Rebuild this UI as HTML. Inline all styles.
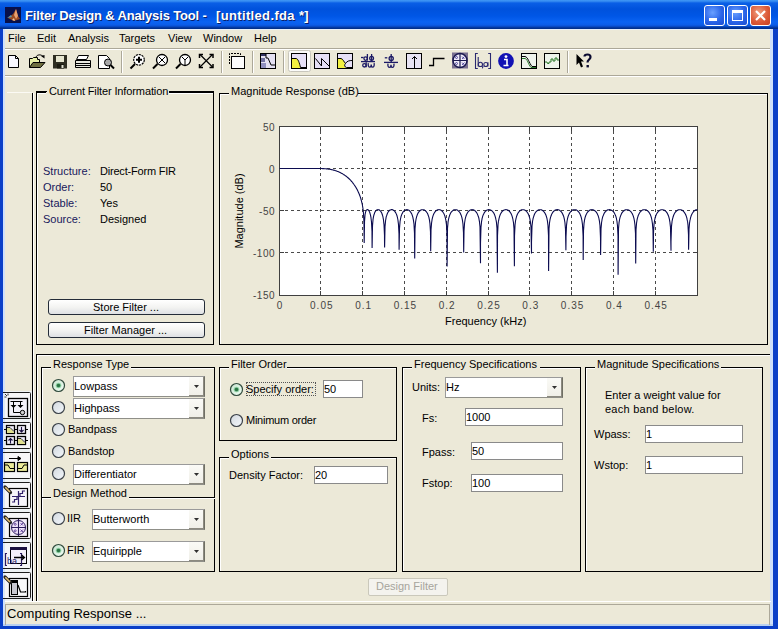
<!DOCTYPE html><html><head><meta charset="utf-8"><style>
html,body{margin:0;padding:0;width:778px;height:629px;overflow:hidden;background:#ECE9D8;font-family:"Liberation Sans", sans-serif}
.t{position:absolute;white-space:pre;font-family:"Liberation Sans", sans-serif}
svg{display:block}
</style></head><body>
<div style="position:absolute;left:0px;top:0px;width:778px;height:29px;background:linear-gradient(#3d95f5 0px,#3a90f2 1px,#0a5fe6 3px,#0052dc 9px,#0056e6 16px,#0a63f2 22px,#0b5ce8 25px,#0743b8 27px,#002f8c 28px)"></div>
<div style="position:absolute;left:0px;top:29px;width:3px;height:600px;background:#0a3fc8"></div>
<div style="position:absolute;left:3px;top:29px;width:2px;height:597px;background:#cfe0fb"></div>
<div style="position:absolute;left:773px;top:29px;width:5px;height:600px;background:#0a3fc8"></div>
<div style="position:absolute;left:770px;top:29px;width:3px;height:597px;background:#cfe0fb"></div>
<div style="position:absolute;left:0px;top:626px;width:778px;height:3px;background:#0a3fc8"></div>
<div style="position:absolute;left:3px;top:624px;width:770px;height:2px;background:#b8d0f0"></div>
<div style="position:absolute;left:5px;top:29px;width:766px;height:1px;background:#e6effb"></div>
<svg style="position:absolute;left:5px;top:7px" width="16" height="16"><rect width="16" height="16" fill="#08104a"/><path d="M3 11 L8 7 L11 2 L13 9 L15 12 L9 14 Z" fill="#9a4a22"/><path d="M11 2 L13 9 L11 12 L9 8Z" fill="#e8a070"/><path d="M7 13 L9 11 L10 14Z" fill="#f0c8a0"/><path d="M2 11 L6 8 L7 10Z" fill="#5a9ab0"/></svg>
<div class="t" style="left:25px;top:9px;font-size:13px;line-height:13px;color:#fff;font-weight:bold;letter-spacing:-0.15px;text-shadow:1px 1px 0 #0a1e6a;">Filter Design &amp; Analysis Tool -</div>
<div class="t" style="left:216px;top:9px;font-size:13px;line-height:13px;color:#fff;font-weight:bold;letter-spacing:0.35px;text-shadow:1px 1px 0 #0a1e6a;">[untitled.fda *]</div>
<div style="position:absolute;left:704px;top:5px;width:21px;height:21px;box-sizing:border-box;border:1px solid #fff;border-radius:3px;background:radial-gradient(circle at 40% 35%,#6aa0ff,#2a64e8 55%,#1a4cd0)"></div>
<div style="position:absolute;left:709px;top:18px;width:8px;height:3px;background:#fff"></div>
<div style="position:absolute;left:727px;top:5px;width:21px;height:21px;box-sizing:border-box;border:1px solid #fff;border-radius:3px;background:radial-gradient(circle at 40% 35%,#6aa0ff,#2a64e8 55%,#1a4cd0)"></div>
<svg style="position:absolute;left:727px;top:5px" width="21" height="21"><rect x="5.5" y="5.5" width="10" height="10" fill="none" stroke="#fff" stroke-width="1"/><rect x="5" y="5" width="11" height="3" fill="#fff"/></svg>
<div style="position:absolute;left:750px;top:5px;width:21px;height:21px;box-sizing:border-box;border:1px solid #fff;border-radius:3px;background:radial-gradient(circle at 40% 35%,#f0a080,#dc5a38 55%,#c84020)"></div>
<svg style="position:absolute;left:750px;top:5px" width="21" height="21"><path d="M6 6L15 15M15 6L6 15" stroke="#fff" stroke-width="2.2"/></svg>
<div class="t" style="left:8px;top:33px;font-size:11px;line-height:11px;color:#000;">File</div>
<div class="t" style="left:37px;top:33px;font-size:11px;line-height:11px;color:#000;">Edit</div>
<div class="t" style="left:68px;top:33px;font-size:11px;line-height:11px;color:#000;">Analysis</div>
<div class="t" style="left:119px;top:33px;font-size:11px;line-height:11px;color:#000;">Targets</div>
<div class="t" style="left:168px;top:33px;font-size:11px;line-height:11px;color:#000;">View</div>
<div class="t" style="left:203px;top:33px;font-size:11px;line-height:11px;color:#000;">Window</div>
<div class="t" style="left:254px;top:33px;font-size:11px;line-height:11px;color:#000;">Help</div>
<div style="position:absolute;left:5px;top:48px;width:765px;height:1px;background:#aca899"></div>
<div style="position:absolute;left:5px;top:49px;width:765px;height:1px;background:#fff"></div>
<div style="position:absolute;left:5px;top:75px;width:766px;height:1px;background:#aca899"></div>
<div style="position:absolute;left:5px;top:76px;width:766px;height:1px;background:#fff"></div>
<div style="position:absolute;left:7px;top:92px;width:25px;height:1px;background:#fbfaf4"></div>
<div style="position:absolute;left:32px;top:93px;width:1px;height:508px;background:#000"></div>
<div style="position:absolute;left:33px;top:93px;width:1px;height:508px;background:#fff"></div>
<div style="position:absolute;left:5px;top:601px;width:766px;height:1px;background:#fff"></div>
<div style="position:absolute;left:37px;top:93px;width:177px;height:252px;border:1px solid #fff;box-sizing:border-box"></div>
<div style="position:absolute;left:36px;top:92px;width:178px;height:253px;border:1px solid #000;box-sizing:border-box"></div>
<div style="position:absolute;left:46px;top:91px;width:123px;height:4px;background:#ECE9D8"></div>
<div class="t" style="left:49px;top:86px;font-size:11px;line-height:11px;color:#000;letter-spacing:-0.12px;">Current Filter Information</div>
<div style="position:absolute;left:36px;top:91px;width:11px;height:1px;background:#000"></div>
<div style="position:absolute;left:169px;top:91px;width:45px;height:1px;background:#000"></div>
<div style="position:absolute;left:220px;top:94px;width:548px;height:251px;border:1px solid #fff;box-sizing:border-box"></div>
<div style="position:absolute;left:219px;top:93px;width:549px;height:252px;border:1px solid #000;box-sizing:border-box"></div>
<div style="position:absolute;left:229px;top:92px;width:129px;height:4px;background:#ECE9D8"></div>
<div class="t" style="left:231px;top:86px;font-size:11px;line-height:11px;color:#000;">Magnitude Response (dB)</div>
<div style="position:absolute;left:36px;top:354px;width:734px;height:1px;background:#000"></div>
<div style="position:absolute;left:37px;top:355px;width:733px;height:1px;background:#fff"></div>
<div style="position:absolute;left:36px;top:354px;width:1px;height:247px;background:#000"></div>
<div style="position:absolute;left:37px;top:355px;width:1px;height:246px;background:#fff"></div>
<div style="position:absolute;left:42px;top:368px;width:173px;height:204px;border:1px solid #fff;box-sizing:border-box"></div>
<div style="position:absolute;left:41px;top:367px;width:174px;height:205px;border:1px solid #000;box-sizing:border-box"></div>
<div style="position:absolute;left:51px;top:366px;width:80px;height:4px;background:#ECE9D8"></div>
<div class="t" style="left:53px;top:359px;font-size:11px;line-height:11px;color:#000;">Response Type</div>
<div style="position:absolute;left:41px;top:497px;width:174px;height:1px;background:#000"></div>
<div style="position:absolute;left:42px;top:498px;width:173px;height:1px;background:#fff"></div>
<div style="position:absolute;left:51px;top:494px;width:78px;height:5px;background:#ECE9D8"></div>
<div class="t" style="left:53px;top:488px;font-size:11px;line-height:11px;color:#000;">Design Method</div>
<div style="position:absolute;left:220px;top:368px;width:177px;height:73px;border:1px solid #fff;box-sizing:border-box"></div>
<div style="position:absolute;left:219px;top:367px;width:178px;height:74px;border:1px solid #000;box-sizing:border-box"></div>
<div style="position:absolute;left:229px;top:366px;width:58px;height:4px;background:#ECE9D8"></div>
<div class="t" style="left:231px;top:359px;font-size:11px;line-height:11px;color:#000;">Filter Order</div>
<div style="position:absolute;left:220px;top:458px;width:177px;height:114px;border:1px solid #fff;box-sizing:border-box"></div>
<div style="position:absolute;left:219px;top:457px;width:178px;height:115px;border:1px solid #000;box-sizing:border-box"></div>
<div style="position:absolute;left:229px;top:456px;width:42px;height:4px;background:#ECE9D8"></div>
<div class="t" style="left:231px;top:449px;font-size:11px;line-height:11px;color:#000;">Options</div>
<div style="position:absolute;left:403px;top:368px;width:178px;height:204px;border:1px solid #fff;box-sizing:border-box"></div>
<div style="position:absolute;left:402px;top:367px;width:179px;height:205px;border:1px solid #000;box-sizing:border-box"></div>
<div style="position:absolute;left:412px;top:366px;width:128px;height:4px;background:#ECE9D8"></div>
<div class="t" style="left:414px;top:359px;font-size:11px;line-height:11px;color:#000;">Frequency Specifications</div>
<div style="position:absolute;left:586px;top:368px;width:177px;height:204px;border:1px solid #fff;box-sizing:border-box"></div>
<div style="position:absolute;left:585px;top:367px;width:178px;height:205px;border:1px solid #000;box-sizing:border-box"></div>
<div style="position:absolute;left:595px;top:366px;width:126px;height:4px;background:#ECE9D8"></div>
<div class="t" style="left:597px;top:359px;font-size:11px;line-height:11px;color:#000;">Magnitude Specifications</div>
<div class="t" style="left:43px;top:166px;font-size:11px;line-height:11px;color:#18185c;">Structure:</div>
<div class="t" style="left:100px;top:166px;font-size:11px;line-height:11px;color:#000;letter-spacing:-0.2px;">Direct-Form FIR</div>
<div class="t" style="left:43px;top:182px;font-size:11px;line-height:11px;color:#18185c;">Order:</div>
<div class="t" style="left:100px;top:182px;font-size:11px;line-height:11px;color:#000;">50</div>
<div class="t" style="left:43px;top:198px;font-size:11px;line-height:11px;color:#18185c;">Stable:</div>
<div class="t" style="left:100px;top:198px;font-size:11px;line-height:11px;color:#000;">Yes</div>
<div class="t" style="left:43px;top:214px;font-size:11px;line-height:11px;color:#18185c;">Source:</div>
<div class="t" style="left:100px;top:214px;font-size:11px;line-height:11px;color:#000;">Designed</div>
<div style="position:absolute;left:48px;top:299px;width:157px;height:16px;background:linear-gradient(#ffffff,#f4f4f2 50%,#dfe1e4);border:1px solid #242c38;border-radius:3px;box-sizing:border-box"></div>
<div class="t" style="left:93px;top:302px;font-size:11px;line-height:11px;color:#000;">Store Filter ...</div>
<div style="position:absolute;left:48px;top:322px;width:157px;height:16px;background:linear-gradient(#ffffff,#f4f4f2 50%,#dfe1e4);border:1px solid #242c38;border-radius:3px;box-sizing:border-box"></div>
<div class="t" style="left:84px;top:325px;font-size:11px;line-height:11px;color:#000;">Filter Manager ...</div>
<svg style="position:absolute;left:51px;top:378px" width="15" height="15"><defs><linearGradient id="rg58_385" x1="0" y1="0" x2="1" y2="1"><stop offset="0" stop-color="#c8e4d0"/><stop offset="1" stop-color="#f2fff6"/></linearGradient></defs><circle cx="7.5" cy="7.5" r="6" fill="url(#rg58_385)" stroke="#304a3c" stroke-width="1.2"/><circle cx="7.5" cy="7.5" r="2.8" fill="#8fd0a4"/><circle cx="7.5" cy="7.5" r="1.8" fill="#2a7444"/></svg>
<div style="position:absolute;left:73px;top:376px;width:132px;height:21px;background:#fff;border:1px solid #9a9a9a;border-right-color:#6f6f64;border-bottom-color:#8f8f88;box-sizing:border-box"></div>
<div style="position:absolute;left:189px;top:377px;width:15px;height:19px;background:linear-gradient(#fafaf6,#f0efe8);border-right:1px solid #8c8a80;border-bottom:1px solid #8c8a80;box-sizing:border-box"></div>
<svg style="position:absolute;left:194px;top:385px" width="6" height="4"><path d="M0 0H5L2.5 3Z" fill="#303030"/></svg>
<div class="t" style="left:74px;top:381px;font-size:11px;line-height:11px;color:#000;">Lowpass</div>
<svg style="position:absolute;left:51px;top:400px" width="15" height="15"><defs><linearGradient id="rg58_407" x1="0" y1="0" x2="1" y2="1"><stop offset="0" stop-color="#d2d8de"/><stop offset="1" stop-color="#f4f8fc"/></linearGradient></defs><circle cx="7.5" cy="7.5" r="6" fill="url(#rg58_407)" stroke="#3a4048" stroke-width="1.2"/></svg>
<div style="position:absolute;left:73px;top:398px;width:132px;height:21px;background:#fff;border:1px solid #9a9a9a;border-right-color:#6f6f64;border-bottom-color:#8f8f88;box-sizing:border-box"></div>
<div style="position:absolute;left:189px;top:399px;width:15px;height:19px;background:linear-gradient(#fafaf6,#f0efe8);border-right:1px solid #8c8a80;border-bottom:1px solid #8c8a80;box-sizing:border-box"></div>
<svg style="position:absolute;left:194px;top:407px" width="6" height="4"><path d="M0 0H5L2.5 3Z" fill="#303030"/></svg>
<div class="t" style="left:74px;top:403px;font-size:11px;line-height:11px;color:#000;">Highpass</div>
<svg style="position:absolute;left:51px;top:422px" width="15" height="15"><defs><linearGradient id="rg58_429" x1="0" y1="0" x2="1" y2="1"><stop offset="0" stop-color="#d2d8de"/><stop offset="1" stop-color="#f4f8fc"/></linearGradient></defs><circle cx="7.5" cy="7.5" r="6" fill="url(#rg58_429)" stroke="#3a4048" stroke-width="1.2"/></svg>
<div class="t" style="left:68px;top:424px;font-size:11px;line-height:11px;color:#000;">Bandpass</div>
<svg style="position:absolute;left:51px;top:444px" width="15" height="15"><defs><linearGradient id="rg58_451" x1="0" y1="0" x2="1" y2="1"><stop offset="0" stop-color="#d2d8de"/><stop offset="1" stop-color="#f4f8fc"/></linearGradient></defs><circle cx="7.5" cy="7.5" r="6" fill="url(#rg58_451)" stroke="#3a4048" stroke-width="1.2"/></svg>
<div class="t" style="left:68px;top:446px;font-size:11px;line-height:11px;color:#000;">Bandstop</div>
<svg style="position:absolute;left:51px;top:466px" width="15" height="15"><defs><linearGradient id="rg58_473" x1="0" y1="0" x2="1" y2="1"><stop offset="0" stop-color="#d2d8de"/><stop offset="1" stop-color="#f4f8fc"/></linearGradient></defs><circle cx="7.5" cy="7.5" r="6" fill="url(#rg58_473)" stroke="#3a4048" stroke-width="1.2"/></svg>
<div style="position:absolute;left:73px;top:464px;width:132px;height:21px;background:#fff;border:1px solid #9a9a9a;border-right-color:#6f6f64;border-bottom-color:#8f8f88;box-sizing:border-box"></div>
<div style="position:absolute;left:189px;top:465px;width:15px;height:19px;background:linear-gradient(#fafaf6,#f0efe8);border-right:1px solid #8c8a80;border-bottom:1px solid #8c8a80;box-sizing:border-box"></div>
<svg style="position:absolute;left:194px;top:473px" width="6" height="4"><path d="M0 0H5L2.5 3Z" fill="#303030"/></svg>
<div class="t" style="left:74px;top:469px;font-size:11px;line-height:11px;color:#000;">Differentiator</div>
<svg style="position:absolute;left:51px;top:511px" width="15" height="15"><defs><linearGradient id="rg58_518" x1="0" y1="0" x2="1" y2="1"><stop offset="0" stop-color="#d2d8de"/><stop offset="1" stop-color="#f4f8fc"/></linearGradient></defs><circle cx="7.5" cy="7.5" r="6" fill="url(#rg58_518)" stroke="#3a4048" stroke-width="1.2"/></svg>
<div class="t" style="left:67px;top:513px;font-size:11px;line-height:11px;color:#000;">IIR</div>
<div style="position:absolute;left:92px;top:509px;width:113px;height:21px;background:#fff;border:1px solid #9a9a9a;border-right-color:#6f6f64;border-bottom-color:#8f8f88;box-sizing:border-box"></div>
<div style="position:absolute;left:189px;top:510px;width:15px;height:19px;background:linear-gradient(#fafaf6,#f0efe8);border-right:1px solid #8c8a80;border-bottom:1px solid #8c8a80;box-sizing:border-box"></div>
<svg style="position:absolute;left:194px;top:518px" width="6" height="4"><path d="M0 0H5L2.5 3Z" fill="#303030"/></svg>
<div class="t" style="left:93px;top:514px;font-size:11px;line-height:11px;color:#000;">Butterworth</div>
<svg style="position:absolute;left:51px;top:543px" width="15" height="15"><defs><linearGradient id="rg58_550" x1="0" y1="0" x2="1" y2="1"><stop offset="0" stop-color="#c8e4d0"/><stop offset="1" stop-color="#f2fff6"/></linearGradient></defs><circle cx="7.5" cy="7.5" r="6" fill="url(#rg58_550)" stroke="#304a3c" stroke-width="1.2"/><circle cx="7.5" cy="7.5" r="2.8" fill="#8fd0a4"/><circle cx="7.5" cy="7.5" r="1.8" fill="#2a7444"/></svg>
<div class="t" style="left:67px;top:545px;font-size:11px;line-height:11px;color:#000;">FIR</div>
<div style="position:absolute;left:92px;top:541px;width:113px;height:21px;background:#fff;border:1px solid #9a9a9a;border-right-color:#6f6f64;border-bottom-color:#8f8f88;box-sizing:border-box"></div>
<div style="position:absolute;left:189px;top:542px;width:15px;height:19px;background:linear-gradient(#fafaf6,#f0efe8);border-right:1px solid #8c8a80;border-bottom:1px solid #8c8a80;box-sizing:border-box"></div>
<svg style="position:absolute;left:194px;top:550px" width="6" height="4"><path d="M0 0H5L2.5 3Z" fill="#303030"/></svg>
<div class="t" style="left:93px;top:546px;font-size:11px;line-height:11px;color:#000;">Equiripple</div>
<svg style="position:absolute;left:229px;top:382px" width="15" height="15"><defs><linearGradient id="rg236_389" x1="0" y1="0" x2="1" y2="1"><stop offset="0" stop-color="#c8e4d0"/><stop offset="1" stop-color="#f2fff6"/></linearGradient></defs><circle cx="7.5" cy="7.5" r="6" fill="url(#rg236_389)" stroke="#304a3c" stroke-width="1.2"/><circle cx="7.5" cy="7.5" r="2.8" fill="#8fd0a4"/><circle cx="7.5" cy="7.5" r="1.8" fill="#2a7444"/></svg>
<div class="t" style="left:246px;top:384px;font-size:11px;line-height:11px;color:#000;">Specify order:</div>
<div style="position:absolute;left:246px;top:382px;width:70px;height:14px;border:1px dotted #555;box-sizing:border-box"></div>
<div style="position:absolute;left:323px;top:380px;width:40px;height:18px;background:#fff;border:1px solid #8a8a8a;box-sizing:border-box"></div>
<div class="t" style="left:324px;top:384px;font-size:11px;line-height:11px;color:#000;">50</div>
<svg style="position:absolute;left:229px;top:413px" width="15" height="15"><defs><linearGradient id="rg236_420" x1="0" y1="0" x2="1" y2="1"><stop offset="0" stop-color="#d2d8de"/><stop offset="1" stop-color="#f4f8fc"/></linearGradient></defs><circle cx="7.5" cy="7.5" r="6" fill="url(#rg236_420)" stroke="#3a4048" stroke-width="1.2"/></svg>
<div class="t" style="left:246px;top:415px;font-size:11px;line-height:11px;color:#000;letter-spacing:-0.25px;">Minimum order</div>
<div class="t" style="left:229px;top:470px;font-size:11px;line-height:11px;color:#000;">Density Factor:</div>
<div style="position:absolute;left:314px;top:466px;width:74px;height:18px;background:#fff;border:1px solid #8a8a8a;box-sizing:border-box"></div>
<div class="t" style="left:315px;top:470px;font-size:11px;line-height:11px;color:#000;">20</div>
<div class="t" style="left:412px;top:382px;font-size:11px;line-height:11px;color:#000;">Units:</div>
<div style="position:absolute;left:445px;top:377px;width:118px;height:21px;background:#fff;border:1px solid #9a9a9a;border-right-color:#6f6f64;border-bottom-color:#8f8f88;box-sizing:border-box"></div>
<div style="position:absolute;left:547px;top:378px;width:15px;height:19px;background:linear-gradient(#fafaf6,#f0efe8);border-right:1px solid #8c8a80;border-bottom:1px solid #8c8a80;box-sizing:border-box"></div>
<svg style="position:absolute;left:552px;top:386px" width="6" height="4"><path d="M0 0H5L2.5 3Z" fill="#303030"/></svg>
<div class="t" style="left:446px;top:382px;font-size:11px;line-height:11px;color:#000;">Hz</div>
<div class="t" style="left:422px;top:413px;font-size:11px;line-height:11px;color:#000;">Fs:</div>
<div style="position:absolute;left:465px;top:408px;width:98px;height:18px;background:#fff;border:1px solid #8a8a8a;box-sizing:border-box"></div>
<div class="t" style="left:466px;top:412px;font-size:11px;line-height:11px;color:#000;">1000</div>
<div class="t" style="left:422px;top:447px;font-size:11px;line-height:11px;color:#000;">Fpass:</div>
<div style="position:absolute;left:471px;top:442px;width:92px;height:18px;background:#fff;border:1px solid #8a8a8a;box-sizing:border-box"></div>
<div class="t" style="left:472px;top:446px;font-size:11px;line-height:11px;color:#000;">50</div>
<div class="t" style="left:422px;top:478px;font-size:11px;line-height:11px;color:#000;">Fstop:</div>
<div style="position:absolute;left:471px;top:474px;width:92px;height:18px;background:#fff;border:1px solid #8a8a8a;box-sizing:border-box"></div>
<div class="t" style="left:472px;top:478px;font-size:11px;line-height:11px;color:#000;">100</div>
<div class="t" style="left:605px;top:390px;font-size:11px;line-height:11px;color:#000;">Enter a weight value for</div>
<div class="t" style="left:605px;top:404px;font-size:11px;line-height:11px;color:#000;letter-spacing:0.25px;">each band below.</div>
<div class="t" style="left:594px;top:429px;font-size:11px;line-height:11px;color:#000;">Wpass:</div>
<div style="position:absolute;left:645px;top:425px;width:98px;height:18px;background:#fff;border:1px solid #8a8a8a;box-sizing:border-box"></div>
<div class="t" style="left:646px;top:429px;font-size:11px;line-height:11px;color:#000;">1</div>
<div class="t" style="left:594px;top:460px;font-size:11px;line-height:11px;color:#000;">Wstop:</div>
<div style="position:absolute;left:645px;top:456px;width:98px;height:18px;background:#fff;border:1px solid #8a8a8a;box-sizing:border-box"></div>
<div class="t" style="left:646px;top:460px;font-size:11px;line-height:11px;color:#000;">1</div>
<div style="position:absolute;left:368px;top:578px;width:80px;height:18px;background:#f4f3ee;border:1px solid #cac8bb;border-radius:2px;box-sizing:border-box"></div>
<div class="t" style="left:376px;top:581px;font-size:11px;line-height:11px;color:#a6a49c;">Design Filter</div>
<div style="position:absolute;left:5px;top:604px;width:765px;height:21px;border-top:1px solid #aca899;border-left:1px solid #aca899;border-right:1px solid #aca899;box-sizing:border-box"></div>
<div class="t" style="left:7px;top:607px;font-size:13px;line-height:13px;color:#000;">Computing Response ...</div>
<svg style="position:absolute;left:0;top:0" width="778" height="629">
<rect x="279.5" y="126.5" width="418" height="169" fill="#fff" stroke="#404040" stroke-width="1"/>
<path d="M320.5 126V295 M362.5 126V295 M404.5 126V295 M446.5 126V295 M488.5 126V295 M529.5 126V295 M571.5 126V295 M613.5 126V295 M655.5 126V295" stroke="#4a4a4a" stroke-width="1" stroke-dasharray="3 3" stroke-dashoffset="1" fill="none"/>
<path d="M279 168.5H697 M279 210.5H697 M279 252.5H697" stroke="#4a4a4a" stroke-width="1" stroke-dasharray="3 3" fill="none"/>
<path d="M320.5 127V131M320.5 295V291 M362.5 127V131M362.5 295V291 M404.5 127V131M404.5 295V291 M446.5 127V131M446.5 295V291 M488.5 127V131M488.5 295V291 M529.5 127V131M529.5 295V291 M571.5 127V131M571.5 295V291 M613.5 127V131M613.5 295V291 M655.5 127V131M655.5 295V291 M280 168.5H284M697 168.5H693 M280 210.5H284M697 210.5H693 M280 252.5H284M697 252.5H693" stroke="#404040" stroke-width="1" fill="none"/>
<path d="M279.5 168.5 L280.0 168.5 280.0 168.5 280.5 168.5 280.5 168.5 281.0 168.5 281.0 168.5 281.5 168.5 281.5 168.5 281.9 168.5 282.0 168.5 282.5 168.5 282.5 168.5 283.0 168.5 283.0 168.5 283.5 168.5 283.5 168.5 284.0 168.5 284.0 168.5 284.4 168.5 284.5 168.5 285.0 168.5 285.0 168.5 285.5 168.5 285.5 168.5 286.0 168.5 286.0 168.5 286.5 168.5 286.5 168.5 286.9 168.5 287.0 168.5 287.5 168.5 287.5 168.5 288.0 168.5 288.0 168.5 288.5 168.5 288.5 168.5 289.0 168.5 289.0 168.5 289.4 168.5 289.5 168.5 290.0 168.5 290.0 168.5 290.5 168.5 290.5 168.5 291.0 168.5 291.0 168.5 291.5 168.5 291.5 168.5 292.0 168.5 292.0 168.5 292.5 168.5 292.5 168.5 293.0 168.5 293.0 168.5 293.5 168.5 293.5 168.5 293.6 168.5 294.0 168.5 294.0 168.5 294.5 168.5 294.5 168.5 295.0 168.5 295.0 168.5 295.5 168.5 295.5 168.5 296.0 168.5 296.0 168.5 296.5 168.5 296.5 168.5 297.0 168.5 297.0 168.5 297.5 168.5 297.5 168.5 298.0 168.5 298.0 168.5 298.5 168.5 298.5 168.5 299.0 168.5 299.0 168.5 299.5 168.5 299.5 168.5 300.0 168.5 300.0 168.5 300.5 168.5 300.5 168.5 301.0 168.5 301.0 168.5 301.5 168.5 301.5 168.5 302.0 168.5 302.0 168.5 302.5 168.5 302.5 168.5 303.0 168.5 303.0 168.5 303.5 168.5 303.5 168.5 304.0 168.5 304.0 168.5 304.5 168.5 304.5 168.5 305.0 168.5 305.0 168.5 305.5 168.5 305.5 168.5 306.0 168.5 306.0 168.5 306.5 168.5 306.5 168.5 306.8 168.5 307.0 168.5 307.0 168.5 307.5 168.5 307.5 168.5 308.0 168.5 308.0 168.5 308.5 168.5 308.5 168.5 309.0 168.5 309.0 168.5 309.5 168.5 309.5 168.5 310.0 168.5 310.0 168.5 310.5 168.5 310.5 168.5 311.0 168.5 311.0 168.5 311.5 168.5 311.5 168.5 312.0 168.5 312.0 168.5 312.5 168.5 312.5 168.5 313.0 168.5 313.0 168.5 313.5 168.5 313.5 168.5 314.0 168.5 314.0 168.5 314.5 168.5 314.5 168.5 315.0 168.5 315.0 168.5 315.5 168.5 315.5 168.5 316.0 168.5 316.0 168.5 316.5 168.5 316.5 168.5 317.0 168.5 317.0 168.5 317.1 168.5 317.5 168.5 317.5 168.5 318.0 168.5 318.0 168.5 318.5 168.5 318.5 168.5 319.0 168.5 319.0 168.5 319.5 168.5 319.5 168.5 320.0 168.5 320.0 168.5 320.5 168.5 320.5 168.5 321.0 168.5 321.0 168.5 321.5 168.5 321.5 168.5 322.0 168.5 322.0 168.5 322.5 168.6 322.5 168.6 323.0 168.6 323.0 168.6 323.5 168.6 323.5 168.6 324.0 168.6 324.0 168.6 324.5 168.7 324.5 168.7 325.0 168.7 325.0 168.7 325.5 168.8 325.5 168.8 326.0 168.8 326.0 168.8 326.5 168.8 326.5 168.9 327.0 168.9 327.0 168.9 327.5 169.0 327.5 169.0 328.0 169.0 328.0 169.0 328.5 169.1 328.5 169.1 329.0 169.2 329.0 169.2 329.5 169.2 329.5 169.2 330.0 169.3 330.0 169.3 330.5 169.4 330.5 169.4 331.0 169.5 331.0 169.5 331.5 169.6 331.5 169.6 332.0 169.7 332.0 169.7 332.5 169.8 332.5 169.8 333.0 169.9 333.0 170.0 333.5 170.1 333.5 170.1 334.0 170.2 334.0 170.2 334.5 170.3 334.5 170.4 335.0 170.5 335.0 170.5 335.5 170.7 335.5 170.7 336.0 170.8 336.0 170.8 336.5 171.0 336.5 171.0 337.0 171.2 337.0 171.2 337.5 171.4 337.5 171.4 338.0 171.6 338.0 171.6 338.5 171.8 338.5 171.8 339.0 172.0 339.0 172.0 339.5 172.2 339.5 172.2 340.0 172.4 340.0 172.5 340.5 172.7 340.5 172.7 341.0 173.0 341.0 173.0 341.5 173.2 341.5 173.3 342.0 173.5 342.0 173.5 342.5 173.8 342.5 173.8 343.0 174.1 343.0 174.1 343.5 174.4 343.5 174.4 344.0 174.7 344.0 174.8 344.5 175.0 344.5 175.1 345.0 175.4 345.0 175.4 345.5 175.8 345.5 175.8 346.0 176.1 346.0 176.2 346.5 176.5 346.5 176.6 347.0 176.9 347.0 176.9 347.5 177.3 347.5 177.4 348.0 177.8 348.0 177.8 348.5 178.2 348.5 178.3 349.0 178.7 349.0 178.7 349.5 179.1 349.5 179.2 350.0 179.7 350.0 179.7 350.5 180.2 350.5 180.2 351.0 180.7 351.0 180.8 351.5 181.3 351.5 181.4 352.0 181.8 352.0 181.9 352.5 182.5 352.5 182.5 353.0 183.1 353.0 183.2 353.5 183.8 353.5 183.8 354.0 184.5 354.0 184.5 354.5 185.1 354.5 185.2 355.0 185.9 355.0 186.0 355.5 186.7 355.5 186.8 356.0 187.5 356.0 187.6 356.5 188.4 356.5 188.5 357.0 189.2 357.0 189.3 357.5 190.2 357.5 190.3 358.0 191.3 358.0 191.4 358.5 192.4 358.5 192.5 359.0 193.5 359.0 193.7 359.5 194.7 359.5 194.8 360.0 196.0 360.0 196.2 360.5 197.5 360.5 197.7 361.0 199.2 361.0 199.4 361.5 201.1 361.5 201.3 362.0 203.0 362.0 203.2 362.5 205.5 362.5 205.8 363.0 208.7 363.0 209.1 363.5 213.3 363.5 213.9 364.0 222.9 364.0 224.9 364.2 242.9 364.5 222.9 364.5 221.6 365.0 215.4 365.0 215.0 365.5 212.5 365.5 212.3 366.0 211.0 366.0 210.8 366.5 210.1 366.5 210.0 367.0 209.7 367.0 209.7 367.4 209.6 367.5 209.6 367.5 209.6 368.0 209.8 368.0 209.8 368.5 210.2 368.5 210.3 369.0 211.0 369.0 211.0 369.5 211.8 369.5 212.0 370.0 213.2 370.0 213.3 370.5 215.0 370.5 215.2 371.0 217.6 371.0 218.0 371.5 222.0 371.5 222.6 372.0 231.5 372.0 234.1 372.1 248.0 372.5 226.6 372.5 225.6 373.0 220.0 373.0 219.6 373.5 216.7 373.5 216.5 374.0 214.6 374.1 214.5 374.5 213.3 374.5 213.1 375.0 212.1 375.0 212.0 375.5 211.3 375.5 211.2 376.0 210.6 376.0 210.6 376.5 210.2 376.6 210.1 377.0 209.9 377.0 209.8 377.5 209.7 377.5 209.7 378.0 209.6 378.0 209.6 378.5 209.7 378.5 209.7 379.0 209.9 379.1 209.9 379.5 210.1 379.5 210.2 380.0 210.5 380.0 210.6 380.5 211.1 380.5 211.1 381.0 211.8 381.0 211.9 381.5 212.7 381.6 212.8 382.0 213.7 382.0 213.8 382.5 215.2 382.5 215.3 383.0 217.1 383.0 217.3 383.5 219.8 383.5 220.2 383.9 223.8 384.0 224.4 384.5 235.6 384.5 239.3 384.6 247.5 385.0 227.5 385.0 226.6 385.5 221.4 385.5 221.0 386.0 218.1 386.0 217.9 386.4 216.2 386.5 216.0 387.0 214.6 387.0 214.4 387.5 213.3 387.5 213.2 388.0 212.3 388.0 212.3 388.5 211.6 388.5 211.5 388.9 211.0 389.0 211.0 389.5 210.5 389.5 210.5 390.0 210.1 390.0 210.1 390.5 209.9 390.5 209.9 391.0 209.7 391.0 209.7 391.4 209.6 391.5 209.6 391.7 209.6 392.0 209.6 392.0 209.7 392.5 209.7 392.5 209.8 393.0 209.9 393.0 209.9 393.5 210.2 393.5 210.2 393.9 210.5 394.0 210.6 394.5 211.0 394.5 211.1 395.0 211.6 395.0 211.7 395.5 212.4 395.5 212.4 396.0 213.3 396.0 213.4 396.5 214.3 396.5 214.4 397.0 215.7 397.0 215.9 397.5 217.6 397.5 217.8 398.0 220.2 398.0 220.6 398.5 224.5 398.5 225.1 399.0 234.0 399.0 236.5 399.1 249.7 399.5 229.1 399.5 228.1 400.0 222.4 400.0 222.0 400.5 219.0 400.5 218.8 401.0 216.8 401.0 216.6 401.5 215.3 401.5 215.1 402.0 214.0 402.0 213.9 402.5 213.0 402.5 212.9 403.0 212.1 403.0 212.0 403.5 211.4 403.5 211.4 404.0 210.9 404.0 210.9 404.5 210.5 404.5 210.5 405.0 210.2 405.0 210.1 405.5 209.9 405.5 209.9 406.0 209.7 406.0 209.7 406.5 209.7 406.5 209.7 406.8 209.6 407.0 209.6 407.0 209.6 407.5 209.7 407.5 209.7 408.0 209.9 408.0 209.9 408.5 210.1 408.5 210.1 409.0 210.3 409.0 210.4 409.5 210.7 409.5 210.8 410.0 211.2 410.0 211.3 410.5 211.9 410.5 211.9 411.0 212.6 411.0 212.7 411.5 213.4 411.5 213.5 412.0 214.6 412.0 214.7 412.5 216.0 412.5 216.1 413.0 217.8 413.0 218.1 413.5 220.4 413.5 220.7 414.0 224.1 414.0 224.6 414.5 233.4 414.5 235.6 414.7 258.4 415.0 230.0 415.0 228.9 415.5 223.0 415.5 222.5 416.0 219.5 416.0 219.2 416.5 217.4 416.5 217.2 417.0 215.7 417.0 215.5 417.5 214.3 417.5 214.2 418.0 213.3 418.0 213.2 418.5 212.4 418.5 212.3 419.0 211.8 419.0 211.7 419.5 211.2 419.5 211.1 420.0 210.7 420.0 210.7 420.5 210.3 420.5 210.3 421.0 210.0 421.0 210.0 421.5 209.9 421.5 209.8 422.0 209.7 422.0 209.7 422.5 209.7 422.5 209.7 422.6 209.7 423.0 209.7 423.0 209.7 423.5 209.8 423.5 209.8 424.0 209.9 424.0 209.9 424.5 210.1 424.5 210.2 425.0 210.4 425.0 210.5 425.5 210.8 425.5 210.9 426.0 211.3 426.0 211.4 426.5 211.9 426.5 212.0 427.0 212.6 427.0 212.7 427.5 213.5 427.5 213.6 428.0 214.6 428.0 214.8 428.5 216.0 428.5 216.2 429.0 217.7 429.0 217.9 429.5 220.1 429.5 220.4 430.0 223.8 430.0 224.4 430.5 232.2 430.5 234.0 430.7 251.2 431.0 231.2 431.0 230.0 431.5 224.0 431.5 223.5 432.0 220.2 432.0 219.9 432.5 217.7 432.5 217.5 433.0 216.0 433.0 215.8 433.5 214.6 433.5 214.5 434.0 213.6 434.0 213.5 434.5 212.7 434.5 212.6 435.0 211.9 435.0 211.9 435.5 211.3 435.5 211.3 436.0 210.8 436.0 210.8 436.5 210.5 436.5 210.4 437.0 210.2 437.0 210.1 437.5 209.9 437.5 209.9 438.0 209.8 438.0 209.7 438.5 209.7 438.5 209.7 438.9 209.6 439.0 209.6 439.0 209.6 439.5 209.7 439.5 209.7 440.0 209.8 440.0 209.8 440.5 210.0 440.5 210.0 441.0 210.3 441.0 210.3 441.5 210.6 441.5 210.6 442.0 211.0 442.0 211.0 442.5 211.5 442.5 211.6 443.0 212.2 443.0 212.2 443.5 213.0 443.5 213.0 444.0 213.8 444.0 213.9 444.5 215.0 444.5 215.1 445.0 216.4 445.0 216.6 445.5 218.3 445.5 218.6 446.0 221.0 446.0 221.4 446.5 224.9 446.5 225.4 447.0 235.7 447.0 238.7 447.1 266.4 447.5 229.3 447.5 228.3 448.0 222.9 448.0 222.4 448.5 219.5 448.5 219.3 449.0 217.5 449.0 217.3 449.5 215.8 449.5 215.7 450.0 214.5 450.0 214.4 450.5 213.4 450.5 213.3 451.0 212.6 451.0 212.5 451.5 211.9 451.5 211.8 452.0 211.3 452.0 211.3 452.5 210.8 452.5 210.8 453.0 210.4 453.0 210.4 453.5 210.1 453.5 210.1 454.0 209.9 454.0 209.9 454.5 209.8 454.5 209.8 455.0 209.7 455.0 209.7 455.4 209.7 455.5 209.7 455.5 209.7 456.0 209.7 456.0 209.7 456.5 209.8 456.5 209.8 457.0 210.0 457.0 210.0 457.5 210.2 457.5 210.3 458.0 210.6 458.0 210.6 458.5 211.0 458.5 211.0 459.0 211.5 459.0 211.5 459.5 212.1 459.5 212.1 460.0 212.8 460.0 212.9 460.5 213.7 460.5 213.8 461.0 214.9 461.0 215.0 461.5 216.1 461.5 216.3 462.0 217.9 462.0 218.1 462.5 220.4 462.5 220.7 463.0 224.2 463.0 224.7 463.5 233.0 463.5 234.9 463.7 252.4 464.0 232.3 464.0 230.9 464.5 224.0 464.5 223.5 465.0 220.3 465.0 220.0 465.5 217.8 465.5 217.6 466.0 216.1 466.0 215.9 466.5 214.8 466.5 214.7 467.0 213.7 467.0 213.6 467.5 212.8 467.5 212.7 468.0 212.1 468.0 212.0 468.5 211.4 468.5 211.4 469.0 211.0 469.0 210.9 469.5 210.6 469.5 210.5 470.0 210.2 470.0 210.2 470.5 210.0 470.5 210.0 471.0 209.8 471.0 209.8 471.5 209.7 471.5 209.7 472.0 209.6 472.0 209.6 472.1 209.6 472.5 209.7 472.5 209.7 473.0 209.7 473.0 209.8 473.5 209.9 473.5 209.9 474.0 210.1 474.0 210.1 474.5 210.4 474.5 210.4 475.0 210.8 475.0 210.8 475.5 211.2 475.5 211.3 476.0 211.8 476.0 211.9 476.5 212.4 476.5 212.5 477.0 213.3 477.0 213.3 477.5 214.3 477.5 214.4 478.0 215.5 478.0 215.6 478.5 217.1 478.6 217.3 479.0 218.9 479.0 219.2 479.5 221.9 479.5 222.2 480.0 226.9 480.0 227.7 480.5 263.2 480.5 243.2 481.0 226.8 481.1 226.1 481.5 222.2 481.5 221.8 482.0 219.1 482.0 218.9 482.5 217.1 482.5 216.9 483.0 215.5 483.0 215.3 483.5 214.2 483.6 214.1 484.0 213.3 484.0 213.2 484.5 212.5 484.5 212.4 485.0 211.8 485.0 211.7 485.5 211.2 485.5 211.2 486.0 210.8 486.1 210.7 486.5 210.4 486.5 210.4 487.0 210.1 487.0 210.1 487.5 209.9 487.5 209.9 488.0 209.7 488.0 209.7 488.4 209.7 488.5 209.7 488.9 209.6 489.0 209.6 489.0 209.6 489.5 209.7 489.5 209.7 490.0 209.8 490.0 209.8 490.5 210.0 490.5 210.0 490.9 210.2 491.0 210.2 491.5 210.5 491.5 210.5 492.0 210.9 492.0 210.9 492.5 211.4 492.5 211.4 493.0 212.0 493.0 212.0 493.4 212.6 493.5 212.7 494.0 213.5 494.0 213.6 494.5 214.5 494.5 214.6 495.0 215.8 495.0 216.0 495.5 217.5 495.5 217.7 495.9 219.4 496.0 219.7 496.5 222.6 496.5 223.0 497.0 228.5 497.0 229.5 497.4 272.8 497.5 238.8 497.5 235.8 498.0 225.6 498.0 225.0 498.4 221.5 498.5 221.2 499.0 218.7 499.0 218.5 499.5 216.8 499.5 216.6 500.0 215.3 500.0 215.1 500.5 214.1 500.5 214.0 501.0 213.2 501.0 213.1 501.5 212.4 501.5 212.3 502.0 211.7 502.0 211.7 502.5 211.2 502.5 211.1 503.0 210.7 503.0 210.7 503.5 210.4 503.5 210.4 504.0 210.1 504.0 210.1 504.5 209.9 504.5 209.9 505.0 209.7 505.0 209.7 505.5 209.7 505.5 209.7 505.8 209.6 506.0 209.6 506.0 209.6 506.5 209.7 506.5 209.7 507.0 209.8 507.0 209.8 507.5 210.0 507.5 210.0 508.0 210.2 508.0 210.3 508.5 210.5 508.5 210.5 509.0 210.9 509.0 211.0 509.5 211.4 509.5 211.5 510.0 212.0 510.0 212.1 510.5 212.7 510.5 212.8 511.0 213.5 511.0 213.6 511.5 214.6 511.5 214.7 512.0 215.9 512.0 216.0 512.5 217.5 512.5 217.7 513.0 219.7 513.0 220.0 513.5 222.7 513.5 223.1 514.0 228.6 514.0 229.5 514.4 266.2 514.5 238.9 514.5 235.9 515.0 225.7 515.0 225.1 515.5 221.3 515.5 220.9 516.0 218.8 516.0 218.6 516.5 216.8 516.5 216.6 517.0 215.3 517.0 215.2 517.5 214.1 517.5 214.0 518.0 213.2 518.0 213.1 518.5 212.4 518.5 212.4 519.0 211.8 519.0 211.7 519.5 211.2 519.5 211.2 520.0 210.8 520.0 210.7 520.5 210.4 520.5 210.4 521.0 210.1 521.0 210.1 521.5 209.9 521.5 209.9 522.0 209.8 522.0 209.7 522.5 209.7 522.5 209.7 522.9 209.7 523.0 209.7 523.0 209.7 523.5 209.7 523.5 209.7 524.0 209.8 524.0 209.8 524.5 210.0 524.5 210.0 525.0 210.2 525.0 210.2 525.5 210.5 525.5 210.6 526.0 210.9 526.0 210.9 526.5 211.4 526.5 211.4 527.0 211.9 527.0 212.0 527.5 212.6 527.5 212.7 528.0 213.5 528.0 213.6 528.5 214.4 528.5 214.5 529.0 215.7 529.0 215.8 529.5 217.2 529.5 217.4 530.0 219.4 530.0 219.6 530.5 222.4 530.5 222.8 531.0 227.2 531.0 228.0 531.5 253.6 531.5 242.1 532.0 226.8 532.0 226.1 532.5 221.9 532.5 221.5 533.0 219.0 533.0 218.8 533.5 217.2 533.5 217.0 534.0 215.6 534.0 215.4 534.5 214.3 534.5 214.2 535.0 213.3 535.0 213.3 535.5 212.5 535.5 212.5 536.0 211.9 536.0 211.8 536.5 211.3 536.5 211.3 537.0 210.9 537.0 210.8 537.5 210.5 537.5 210.4 538.0 210.2 538.0 210.1 538.5 210.0 538.5 209.9 539.0 209.8 539.0 209.8 539.5 209.7 539.5 209.7 540.0 209.7 540.0 209.7 540.5 209.7 540.5 209.7 541.0 209.8 541.0 209.8 541.5 209.9 541.5 209.9 542.0 210.1 542.0 210.2 542.5 210.4 542.5 210.5 543.0 210.8 543.0 210.8 543.5 211.2 543.5 211.3 544.0 211.8 544.0 211.8 544.5 212.4 544.5 212.5 545.0 213.2 545.0 213.3 545.5 214.2 545.5 214.3 546.0 215.2 546.0 215.4 546.5 216.7 546.5 216.9 547.0 218.6 547.0 218.8 547.5 221.3 547.5 221.6 548.0 225.7 548.0 226.3 548.5 235.8 548.5 238.7 548.6 270.9 549.0 229.7 549.0 228.7 549.5 223.2 549.5 222.8 550.0 219.8 550.0 219.6 550.5 217.6 550.5 217.4 551.0 216.1 551.0 215.9 551.5 214.8 551.5 214.6 552.0 213.7 552.0 213.6 552.5 212.8 552.5 212.7 553.0 212.1 553.0 212.0 553.5 211.5 553.5 211.5 554.0 211.0 554.0 211.0 554.5 210.6 554.5 210.6 555.0 210.3 555.0 210.2 555.5 210.0 555.5 210.0 556.0 209.8 556.0 209.8 556.5 209.7 556.5 209.7 557.0 209.6 557.0 209.6 557.2 209.6 557.5 209.6 557.5 209.6 558.0 209.7 558.0 209.7 558.5 209.8 558.5 209.8 559.0 210.0 559.0 210.0 559.5 210.3 559.5 210.3 560.0 210.6 560.0 210.6 560.5 211.0 560.5 211.1 561.0 211.5 561.0 211.5 561.5 212.1 561.5 212.1 562.0 212.8 562.0 212.9 562.5 213.7 562.5 213.8 563.0 214.7 563.0 214.8 563.5 215.9 563.5 216.0 564.0 217.5 564.0 217.7 564.5 219.8 564.5 220.0 565.0 223.0 565.0 223.5 565.5 229.3 565.5 230.3 565.9 250.2 566.0 240.6 566.0 237.0 566.5 226.0 566.5 225.4 567.0 221.5 567.0 221.2 567.5 218.8 567.5 218.5 568.0 216.8 568.0 216.7 568.5 215.5 568.5 215.3 569.0 214.3 569.0 214.2 569.5 213.3 569.5 213.2 570.0 212.5 570.0 212.4 570.5 211.8 570.5 211.8 571.0 211.3 571.0 211.3 571.5 210.8 571.5 210.8 572.0 210.5 572.0 210.4 572.5 210.2 572.5 210.1 573.0 209.9 573.0 209.9 573.5 209.8 573.5 209.8 574.0 209.7 574.0 209.7 574.5 209.7 574.5 209.7 575.0 209.7 575.0 209.7 575.5 209.8 575.5 209.8 576.0 209.9 576.0 209.9 576.5 210.1 576.5 210.1 577.0 210.4 577.0 210.4 577.5 210.8 577.5 210.8 578.0 211.2 578.0 211.3 578.5 211.7 578.5 211.8 579.0 212.3 579.0 212.4 579.5 213.1 579.5 213.2 580.0 214.0 580.0 214.2 580.5 215.2 580.5 215.3 581.0 216.5 581.0 216.6 581.5 218.3 581.5 218.5 582.0 220.8 582.0 221.1 582.5 224.7 582.5 225.3 583.0 234.0 583.1 236.2 583.2 259.9 583.5 232.0 583.5 230.7 584.0 224.1 584.0 223.6 584.5 220.4 584.5 220.1 585.0 218.0 585.0 217.8 585.5 216.3 585.6 216.1 586.0 215.0 586.0 214.9 586.5 213.9 586.5 213.8 587.0 213.0 587.0 212.9 587.5 212.3 587.5 212.2 588.0 211.6 588.1 211.6 588.5 211.2 588.5 211.1 589.0 210.7 589.0 210.7 589.5 210.4 589.5 210.3 590.0 210.1 590.0 210.1 590.5 209.9 590.6 209.9 591.0 209.7 591.0 209.7 591.5 209.7 591.5 209.7 591.9 209.6 592.0 209.6 592.0 209.6 592.5 209.7 592.5 209.7 592.9 209.8 593.0 209.8 593.5 209.9 593.5 210.0 594.0 210.2 594.0 210.2 594.5 210.5 594.5 210.5 595.0 210.8 595.0 210.9 595.4 211.3 595.5 211.3 596.0 211.8 596.0 211.9 596.5 212.5 596.5 212.6 597.0 213.3 597.0 213.4 597.5 214.2 597.5 214.4 597.9 215.3 598.0 215.4 598.5 216.8 598.5 216.9 599.0 218.7 599.0 218.9 599.5 221.3 599.5 221.7 600.0 225.7 600.0 226.3 600.4 235.4 600.5 238.2 600.6 255.0 601.0 230.0 601.0 229.0 601.5 223.4 601.5 223.0 602.0 220.0 602.0 219.7 602.5 217.7 602.5 217.5 602.9 216.2 603.0 216.1 603.5 214.9 603.5 214.8 604.0 213.8 604.0 213.7 604.5 212.9 604.5 212.8 605.0 212.2 605.0 212.1 605.5 211.6 605.5 211.6 606.0 211.1 606.0 211.1 606.5 210.7 606.5 210.6 607.0 210.3 607.0 210.3 607.5 210.1 607.5 210.0 608.0 209.9 608.0 209.9 608.5 209.7 608.5 209.7 609.0 209.7 609.0 209.7 609.3 209.6 609.5 209.6 609.5 209.6 610.0 209.7 610.0 209.7 610.5 209.8 610.5 209.8 611.0 210.0 611.0 210.0 611.5 210.2 611.5 210.2 612.0 210.5 612.0 210.5 612.5 210.9 612.5 210.9 613.0 211.3 613.0 211.3 613.5 211.9 613.5 211.9 614.0 212.5 614.0 212.6 614.5 213.3 614.5 213.4 615.0 214.3 615.0 214.4 615.5 215.4 615.5 215.5 616.0 216.8 616.0 217.0 616.5 218.7 616.5 219.0 617.0 221.4 617.0 221.8 617.5 225.8 617.5 226.5 618.0 236.0 618.0 238.9 618.1 274.8 618.5 229.8 618.5 228.8 619.0 223.3 619.0 222.9 619.5 220.0 619.5 219.7 620.0 217.7 620.0 217.5 620.5 216.2 620.5 216.1 621.0 214.9 621.0 214.8 621.5 213.8 621.5 213.7 622.0 212.9 622.0 212.8 622.5 212.2 622.5 212.1 623.0 211.6 623.0 211.6 623.5 211.1 623.5 211.1 624.0 210.7 624.0 210.7 624.5 210.3 624.5 210.3 625.0 210.1 625.0 210.1 625.5 209.9 625.5 209.9 626.0 209.8 626.0 209.7 626.5 209.7 626.5 209.7 626.9 209.7 627.0 209.7 627.0 209.7 627.5 209.7 627.5 209.7 628.0 209.8 628.0 209.8 628.5 210.0 628.5 210.0 629.0 210.2 629.0 210.2 629.5 210.5 629.5 210.5 630.0 210.9 630.0 210.9 630.5 211.3 630.5 211.3 631.0 211.8 631.0 211.9 631.5 212.5 631.5 212.5 632.0 213.3 632.0 213.4 632.5 214.2 632.5 214.3 633.0 215.3 633.0 215.4 633.5 216.7 633.5 216.9 634.0 218.5 634.0 218.8 634.5 221.1 634.5 221.5 635.0 225.3 635.0 225.8 635.5 233.8 635.5 235.9 635.7 263.6 636.0 231.0 636.0 229.9 636.5 223.8 636.5 223.4 637.0 220.3 637.0 220.0 637.5 218.0 637.5 217.8 638.0 216.4 638.0 216.2 638.5 215.0 638.5 214.9 639.0 213.9 639.0 213.8 639.5 213.0 639.5 212.9 640.0 212.3 640.0 212.2 640.5 211.7 640.5 211.7 641.0 211.2 641.0 211.1 641.5 210.7 641.5 210.7 642.0 210.4 642.0 210.4 642.5 210.1 642.5 210.1 643.0 209.9 643.0 209.9 643.5 209.8 643.5 209.8 644.0 209.7 644.0 209.7 644.5 209.7 644.5 209.7 645.0 209.7 645.0 209.7 645.5 209.8 645.5 209.8 646.0 209.9 646.0 209.9 646.5 210.1 646.5 210.2 647.0 210.4 647.0 210.5 647.5 210.8 647.5 210.8 648.0 211.2 648.0 211.2 648.5 211.7 648.5 211.8 649.0 212.3 649.0 212.4 649.5 213.1 649.5 213.2 650.0 214.0 650.0 214.1 650.5 215.0 650.5 215.1 651.0 216.4 651.0 216.5 651.5 218.1 651.5 218.3 652.0 220.5 652.0 220.8 652.5 224.1 652.5 224.6 653.0 230.6 653.0 231.8 653.3 251.8 653.5 234.6 653.5 232.8 654.0 225.0 654.0 224.4 654.5 221.0 654.5 220.7 655.0 218.5 655.0 218.2 655.5 216.8 655.5 216.6 656.0 215.3 656.0 215.2 656.5 214.2 656.5 214.1 657.0 213.2 657.0 213.2 657.5 212.5 657.5 212.4 658.0 211.9 658.0 211.8 658.5 211.3 658.5 211.3 659.0 210.9 659.0 210.8 659.5 210.5 659.5 210.4 660.0 210.2 660.0 210.2 660.5 210.0 660.5 210.0 661.0 209.8 661.0 209.8 661.5 209.7 661.5 209.7 662.0 209.7 662.0 209.7 662.1 209.7 662.5 209.7 662.5 209.7 663.0 209.7 663.0 209.7 663.5 209.9 663.5 209.9 664.0 210.1 664.0 210.1 664.5 210.3 664.5 210.4 665.0 210.7 665.0 210.7 665.5 211.0 665.5 211.1 666.0 211.5 666.0 211.6 666.5 212.1 666.5 212.2 667.0 212.8 667.0 212.9 667.5 213.7 667.5 213.8 668.0 214.6 668.0 214.8 668.5 215.9 668.5 216.0 669.0 217.5 669.0 217.7 669.5 219.6 669.5 219.9 670.0 222.7 670.0 223.1 670.5 227.5 670.5 228.4 671.0 250.8 671.0 241.6 671.5 227.0 671.5 226.3 672.0 222.1 672.0 221.7 672.5 219.2 672.5 219.0 673.0 217.4 673.0 217.2 673.5 215.8 673.5 215.7 674.0 214.5 674.0 214.4 674.5 213.5 674.5 213.5 675.0 212.7 675.0 212.6 675.5 212.1 675.5 212.0 676.0 211.5 676.0 211.4 676.5 211.0 676.5 211.0 677.0 210.6 677.0 210.6 677.5 210.3 677.5 210.3 678.0 210.1 678.0 210.0 678.5 209.9 678.5 209.8 679.0 209.7 679.0 209.7 679.5 209.7 679.5 209.7 679.8 209.7 680.0 209.7 680.0 209.7 680.5 209.7 680.5 209.7 681.0 209.8 681.0 209.8 681.5 210.0 681.5 210.0 682.0 210.2 682.0 210.3 682.5 210.5 682.5 210.6 683.0 210.9 683.0 210.9 683.5 211.3 683.5 211.4 684.0 211.9 684.0 212.0 684.5 212.6 684.5 212.6 685.0 213.4 685.0 213.5 685.5 214.2 685.5 214.3 686.0 215.4 686.0 215.5 686.5 216.8 686.5 217.0 687.0 218.7 687.0 219.0 687.5 221.4 687.6 221.7 688.0 225.1 688.0 225.7 688.5 235.0 688.5 237.5 688.6 249.8 689.0 230.4 689.0 229.3 689.5 223.6 689.5 223.2 690.0 220.2 690.1 219.9 690.5 218.1 690.5 217.9 691.0 216.4 691.0 216.2 691.5 215.0 691.5 214.9 692.0 213.9 692.0 213.8 692.5 213.0 692.6 212.9 693.0 212.3 693.0 212.3 693.5 211.7 693.5 211.7 694.0 211.2 694.0 211.1 694.5 210.8 694.5 210.7 695.0 210.4 695.1 210.4 695.5 210.1 695.5 210.1 696.0 209.9 696.0 209.9 696.5 209.8 696.5 209.8 697.0 209.7 697.0 209.7 697.4 209.7" fill="none" stroke="#0c0c50" stroke-width="1.1"/>
</svg>
<div class="t" style="left:225px;width:50px;text-align:right;top:123px;font-size:10px;line-height:10px;color:#444;letter-spacing:0.5px">50</div>
<div class="t" style="left:225px;width:50px;text-align:right;top:165px;font-size:10px;line-height:10px;color:#444;letter-spacing:0.5px">0</div>
<div class="t" style="left:225px;width:50px;text-align:right;top:207px;font-size:10px;line-height:10px;color:#444;letter-spacing:0.5px">-50</div>
<div class="t" style="left:225px;width:50px;text-align:right;top:249px;font-size:10px;line-height:10px;color:#444;letter-spacing:0.5px">-100</div>
<div class="t" style="left:225px;width:50px;text-align:right;top:291px;font-size:10px;line-height:10px;color:#444;letter-spacing:0.5px">-150</div>
<div class="t" style="left:250.0px;width:60px;text-align:center;top:301px;font-size:10px;line-height:10px;color:#444;letter-spacing:1px">0</div>
<div class="t" style="left:291.8px;width:60px;text-align:center;top:301px;font-size:10px;line-height:10px;color:#444;letter-spacing:1px">0.05</div>
<div class="t" style="left:333.6px;width:60px;text-align:center;top:301px;font-size:10px;line-height:10px;color:#444;letter-spacing:1px">0.1</div>
<div class="t" style="left:375.4px;width:60px;text-align:center;top:301px;font-size:10px;line-height:10px;color:#444;letter-spacing:1px">0.15</div>
<div class="t" style="left:417.2px;width:60px;text-align:center;top:301px;font-size:10px;line-height:10px;color:#444;letter-spacing:1px">0.2</div>
<div class="t" style="left:459.0px;width:60px;text-align:center;top:301px;font-size:10px;line-height:10px;color:#444;letter-spacing:1px">0.25</div>
<div class="t" style="left:500.8px;width:60px;text-align:center;top:301px;font-size:10px;line-height:10px;color:#444;letter-spacing:1px">0.3</div>
<div class="t" style="left:542.6px;width:60px;text-align:center;top:301px;font-size:10px;line-height:10px;color:#444;letter-spacing:1px">0.35</div>
<div class="t" style="left:584.4px;width:60px;text-align:center;top:301px;font-size:10px;line-height:10px;color:#444;letter-spacing:1px">0.4</div>
<div class="t" style="left:626.2px;width:60px;text-align:center;top:301px;font-size:10px;line-height:10px;color:#444;letter-spacing:1px">0.45</div>
<div class="t" style="left:445px;top:316px;font-size:11px;line-height:11px;color:#000;">Frequency (kHz)</div>
<div class="t" style="left:239px;top:211px;font-size:11px;line-height:11px;transform:translate(-50%,-50%) rotate(-90deg);">Magnitude (dB)</div>
<svg style="position:absolute;left:0;top:0" width="778" height="80">
<!-- separators -->
<g fill="#aca899"><rect x="121" y="51" width="1" height="22"/><rect x="221" y="51" width="1" height="22"/><rect x="252" y="51" width="1" height="22"/><rect x="283" y="51" width="1" height="22"/><rect x="567" y="51" width="1" height="22"/></g>
<g fill="#fff"><rect x="122" y="51" width="1" height="22"/><rect x="222" y="51" width="1" height="22"/><rect x="253" y="51" width="1" height="22"/><rect x="284" y="51" width="1" height="22"/><rect x="568" y="51" width="1" height="22"/></g>
<!-- new -->
<path d="M8.5 55.5H15.5L18.5 58.5V67.5H8.5Z" fill="#f8f8ff" stroke="#000"/>
<path d="M15.5 55.5V58.5H18.5" fill="none" stroke="#000"/>
<!-- open -->
<path d="M29.5 67.5V58.5H32.5L33.5 57.5H37.5V59.5H39.5V62" fill="#e8f0a8" stroke="#000"/>
<path d="M29.5 67.5L33 62.5H45L40.5 67.5Z" fill="#6f6f40" stroke="#000"/>
<path d="M36 57C37 54.5 41 54 43 56.5" fill="none" stroke="#000"/>
<path d="M41 56L44.5 58.5L44.5 55Z" fill="#000"/>
<!-- save -->
<rect x="53" y="55" width="14" height="13.5" fill="#2e2e22"/>
<rect x="56" y="56" width="8" height="6" fill="#e6e6d0"/>
<rect x="57" y="64" width="7" height="4.5" fill="#1a1a10"/>
<rect x="61.5" y="65" width="2" height="3" fill="#e0e0d0"/>
<!-- print -->
<path d="M78.5 55.5H88.5L86.5 59.5H76.5Z" fill="#fff" stroke="#000"/>
<path d="M75.5 60.5H90.5V67.5H75.5Z" fill="#e8e8e0" stroke="#000"/>
<path d="M76 63.5H90M76 65.5H90" stroke="#000"/>
<!-- preview -->
<path d="M98.5 55.5H106.5L109.5 58.5V68.5H98.5Z" fill="#fff" stroke="#000"/>
<circle cx="108" cy="62.5" r="3.5" fill="#a8a8a8" stroke="#000"/>
<path d="M110.5 65L114 68.5" stroke="#000" stroke-width="2"/>
<!-- zoom in -->
<circle cx="139" cy="59.8" r="5.3" fill="#fff" stroke="#000" stroke-width="1.2" stroke-dasharray="2.2 0.8"/>
<path d="M136 59.8H142M139 56.8V62.8" stroke="#000" stroke-width="2"/>
<path d="M130.5 68.5L135 64" stroke="#000" stroke-width="2"/>
<!-- zoom x -->
<circle cx="162" cy="60" r="5.5" fill="#fff" stroke="#000" stroke-width="1.3"/>
<path d="M159 57L165 63M165 57L159 63" stroke="#000" stroke-width="1"/>
<path d="M153 68.5L157.5 64" stroke="#000" stroke-width="2"/>
<!-- zoom y -->
<circle cx="185" cy="60" r="5.5" fill="#fff" stroke="#000" stroke-width="1.3"/>
<path d="M182 57L185 60L188 57M185 60V65" stroke="#000" stroke-width="1" fill="none"/>
<path d="M176 68.5L180.5 64" stroke="#000" stroke-width="2"/>
<!-- full view -->
<path d="M200 54.5L212.5 67M212.5 54.5L200 67" stroke="#000" stroke-width="1.2"/>
<path d="M199.5 58V54.5H203M209.5 54.5H213V58M199.5 64V67.5H203M209.5 67.5H213V64" stroke="#000" stroke-width="1.5" fill="none"/>
<!-- new figure -->
<path d="M229.5 64V53.5H240.5V56" fill="none" stroke="#000" stroke-dasharray="2 1"/>
<rect x="231.5" y="56.5" width="13" height="12" fill="#fcfcfc" stroke="#000"/>
<!-- filter structure -->
<rect x="260.5" y="53.5" width="15" height="15" fill="#e4e0f2" stroke="#000"/>
<rect x="261" y="54" width="5" height="2" fill="#303060"/>
<rect x="261" y="58" width="4" height="4" fill="#7070a0"/>
<rect x="261" y="63" width="5" height="5" fill="#9090c0"/>
<path d="M266 54V58H268L271 65H275" fill="none" stroke="#000"/>
<!-- toggle highlight -->
<rect x="288.5" y="50.5" width="22" height="21" rx="2" fill="#fbfbf9" stroke="#c8c6bc"/>
<!-- mag -->
<rect x="291.5" y="53.5" width="15" height="15" fill="#e6e0f6" stroke="#000"/>
<path d="M292 58.5H296C298 58.5 299.5 63 300.5 68H292Z" fill="#f2f040"/>
<path d="M292 58.5H296C298 58.5 299.5 63 300.5 67.5H306.5" fill="none" stroke="#000"/>
<!-- phase -->
<rect x="314.5" y="53.5" width="15" height="15" fill="#e6e0f6" stroke="#000"/>
<path d="M315.5 58.5L321.5 66V58.5L329 66" fill="none" stroke="#000"/>
<!-- mag & phase -->
<rect x="337.5" y="53.5" width="15" height="15" fill="#e6e0f6" stroke="#000"/>
<path d="M338 58.5H341C343.5 59 344 62 345 63L344 66L346 68H338Z" fill="#f2f040"/>
<path d="M338 58.5H341C343 59 344 62 345.5 63.5C344 65 344.5 67 346.5 67.5H352.5M345.5 63.5C347 61 349 60.5 352.5 60.5" fill="none" stroke="#000"/>
<!-- group delay -->
<g fill="none" stroke="#1c1a66" stroke-width="1.3">
<path d="M361 57.5H363.5"/>
<circle cx="365.6" cy="58.6" r="1.7"/><path d="M367.4 54V60.6"/>
<circle cx="371.6" cy="58.3" r="1.9"/><path d="M371.6 54V61"/>
<path d="M361 61.6H375"/>
<circle cx="364.4" cy="65.3" r="1.7"/><path d="M366.2 62.2V67.2"/>
<path d="M368.3 63.2C367.8 66 368.8 67.2 369.8 67.2C370.8 67.2 371.2 65.5 371.2 64.6C371.2 65.5 371.6 67.2 372.6 67.2C373.6 67.2 374.6 66 374.1 63.2"/>
</g>
<!-- phase delay -->
<g fill="none" stroke="#1c1a66" stroke-width="1.3">
<path d="M384.8 57.8H387.3"/>
<circle cx="391.2" cy="58.6" r="2.1"/><path d="M391.2 54V62"/>
<path d="M384 62.4H398"/>
<path d="M388 63.6C387.5 66.3 388.5 67.4 389.5 67.4C390.5 67.4 391 65.7 391 64.8C391 65.7 391.4 67.4 392.4 67.4C393.4 67.4 394.4 66.3 393.9 63.6"/>
</g>
<!-- impulse -->
<rect x="406.5" y="53.5" width="15" height="15" fill="#e8e4f4" stroke="#000"/>
<path d="M414.5 68V56.5M412 59L414.5 56.5L417 59" fill="none" stroke="#000" stroke-width="1"/>
<!-- step -->
<path d="M429 65.5H433.5V58.5H444.5" fill="none" stroke="#000" stroke-width="1.3"/>
<!-- pole zero -->
<rect x="452" y="52.5" width="16" height="16" fill="#7a7090"/>
<circle cx="460" cy="60.5" r="7" fill="#f0ecf8" stroke="#1c1a50" stroke-width="1.5"/>
<path d="M453 60.5H467M460 53.5V67.5" stroke="#1c1a50" stroke-width="1.2"/>
<g fill="none" stroke="#3a3090" stroke-width="0.8"><circle cx="456.5" cy="57.5" r="1"/><circle cx="456.5" cy="63.5" r="1"/><path d="M462 56.5L464.5 59M464.5 56.5L462 59M462 62.5L464.5 65M464.5 62.5L462 65"/></g>
<!-- coeffs -->
<g fill="none" stroke="#2a2870" stroke-width="1.1">
<path d="M477.8 53.5H475.5V68.5H477.8M488.2 53.5H490.5V68.5H488.2"/>
<path d="M478.2 57V66.6"/><circle cx="480.4" cy="64.4" r="2.1"/>
<path d="M483 65.8L482.4 68.4"/>
<circle cx="485.8" cy="64.5" r="2"/><path d="M487.9 62.3V66.6"/>
</g>
<!-- info -->
<circle cx="506" cy="61" r="7.9" fill="#1212b4"/>
<circle cx="506" cy="56.6" r="1.4" fill="#fff"/>
<path d="M504 59.5H507V65.5H508.5M503.5 65.5H508.5" fill="none" stroke="#fff" stroke-width="1.6"/>
<!-- mag estimate -->
<rect x="521.5" y="53.5" width="15" height="15" fill="#f0f4ec" stroke="#000"/>
<path d="M522 56.5H525C528 57 529 63 532 66.5H536" fill="none" stroke="#000"/>
<path d="M522 58.5H525C527.5 59 528 64 531 67.5H536" fill="none" stroke="#2a7a2a"/>
<!-- round off noise -->
<rect x="544.5" y="53.5" width="15" height="15" fill="#eef4ec" stroke="#000"/>
<path d="M545 62H547L547.5 63.5H549V62H551V59H553V61H555V58H557V60H559" fill="none" stroke="#2a7a2a"/>
<!-- whats this -->
<path d="M576.5 54V65L579 62.5L581 67.5L583 66.5L581 61.5H584Z" fill="#000"/>
<path d="M584.5 56.5C584.5 54 590.5 53.5 590.5 57C590.5 59.5 587.5 59.5 587.5 62.5" fill="none" stroke="#0a0a30" stroke-width="2.2"/>
<rect x="586.5" y="65" width="2.4" height="2.4" fill="#0a0a30"/>
</svg>

<svg style="position:absolute;left:0;top:0" width="40" height="629">
<rect x="5" y="391" width="27" height="210" fill="#eef2f4"/>
<rect x="3" y="392" width="28" height="27" fill="#f6f6f8"/>
<path d="M3 392.5H29.5Q30.5 392.5 30.5 393.5V417.5Q30.5 418.5 29.5 418.5H3" fill="none" stroke="#1e1e1e"/>
<rect x="3" y="393" width="2" height="25" fill="#dce8f6"/>
<rect x="3" y="422" width="28" height="27" fill="#f6f6f8"/>
<path d="M3 422.5H29.5Q30.5 422.5 30.5 423.5V447.5Q30.5 448.5 29.5 448.5H3" fill="none" stroke="#1e1e1e"/>
<rect x="3" y="423" width="2" height="25" fill="#dce8f6"/>
<rect x="3" y="452" width="28" height="27" fill="#f6f6f8"/>
<path d="M3 452.5H29.5Q30.5 452.5 30.5 453.5V477.5Q30.5 478.5 29.5 478.5H3" fill="none" stroke="#1e1e1e"/>
<rect x="3" y="453" width="2" height="25" fill="#dce8f6"/>
<rect x="3" y="482" width="28" height="27" fill="#f6f6f8"/>
<path d="M3 482.5H29.5Q30.5 482.5 30.5 483.5V507.5Q30.5 508.5 29.5 508.5H3" fill="none" stroke="#1e1e1e"/>
<rect x="3" y="483" width="2" height="25" fill="#dce8f6"/>
<rect x="3" y="512" width="28" height="27" fill="#f6f6f8"/>
<path d="M3 512.5H29.5Q30.5 512.5 30.5 513.5V537.5Q30.5 538.5 29.5 538.5H3" fill="none" stroke="#1e1e1e"/>
<rect x="3" y="513" width="2" height="25" fill="#dce8f6"/>
<rect x="3" y="542" width="28" height="27" fill="#f6f6f8"/>
<path d="M3 542.5H29.5Q30.5 542.5 30.5 543.5V567.5Q30.5 568.5 29.5 568.5H3" fill="none" stroke="#1e1e1e"/>
<rect x="3" y="543" width="2" height="25" fill="#dce8f6"/>
<rect x="3" y="572" width="28" height="27" fill="#f6f6f8"/>
<path d="M3 572.5H29.5Q30.5 572.5 30.5 573.5V597.5Q30.5 598.5 29.5 598.5H3" fill="none" stroke="#1e1e1e"/>
<rect x="3" y="573" width="2" height="25" fill="#dce8f6"/>
<rect x="8.5" y="398.5" width="19" height="18" fill="#f4f2fa" stroke="#000" stroke-width="1.3"/>
<path d="M10.5 401.5H22.5M13.5 401.5V405M20.5 401.5V405M13.5 407V412.5H20.5" fill="none" stroke="#000"/>
<path d="M10.5 405H16.5L13.5 408Z M17.5 405H23.5L20.5 408Z" fill="#000"/>
<circle cx="22.5" cy="412.5" r="2.2" fill="#d0d0d0" stroke="#000"/>
<path d="M5 394L7 396M4.5 397H6.5M8 393.5V395.5" stroke="#000" stroke-width="0.8"/>
<rect x="6.5" y="425.5" width="8" height="8" fill="#f0eefa" stroke="#000" stroke-width="1.3"/>
<path d="M7 428H10L14 432V433H7Z" fill="#e0e090"/><path d="M7 427.5H10L14 431.5" fill="none" stroke="#000" stroke-width="0.8"/>
<rect x="17.5" y="425.5" width="8" height="8" fill="#f0eefa" stroke="#000" stroke-width="1.3"/>
<path d="M21.5 427V432M19.5 430L21.5 432L23.5 430" fill="none" stroke="#1a1040" stroke-width="1.1"/>
<rect x="6.5" y="436.5" width="8" height="8" fill="#f0eefa" stroke="#000" stroke-width="1.3"/>
<path d="M10.5 443.5V438.5M8.5 440.5L10.5 438.5L12.5 440.5" fill="none" stroke="#1a1040" stroke-width="1.1"/>
<rect x="17.5" y="436.5" width="8" height="8" fill="#f0eefa" stroke="#000" stroke-width="1.3"/>
<path d="M18 439H21L25 443V444H18Z" fill="#e0e090"/><path d="M18 438.5H21L25 442.5" fill="none" stroke="#000" stroke-width="0.8"/>
<path d="M4 429.5H6.5M14.5 429.5H17.5M25.5 429.5H28M4 440.5H6.5M14.5 440.5H17.5M25.5 440.5H28" stroke="#000" stroke-width="1.2"/>
<path d="M9 458.5H20M18 456.5L21 458.5L18 460.5Z" fill="#000" stroke="#000"/>
<rect x="4.5" y="462.5" width="10" height="9" fill="#ecec9a" stroke="#000" stroke-width="1.2"/>
<path d="M5 465H8L10 468.5H14" fill="none" stroke="#000"/>
<rect x="17.5" y="462.5" width="10" height="9" fill="#ecec9a" stroke="#000" stroke-width="1.2"/>
<path d="M18 468.5H22L24 465H27" fill="none" stroke="#000"/>
<rect x="9.5" y="488.5" width="18" height="18" fill="#f6f4fa" stroke="#000" stroke-width="1.2"/>
<path d="M18.5 491V505M12 496.5H25M12 502H14.5V499.5H17V496.5M20 496.5V493.5H22.5V491H25" fill="none" stroke="#30206a" stroke-width="1.2"/>
<path d="M5 487L10.5 492.5" stroke="#202020" stroke-width="3.2" stroke-linecap="round"/>
<path d="M5.3 487.3L10 492" stroke="#e8c070" stroke-width="1.6"/>
<rect x="9.5" y="518.5" width="18" height="18" fill="#f4eefa" stroke="#000" stroke-width="1.2"/>
<circle cx="18.5" cy="527.5" r="7" fill="#f0e4fa" stroke="#2a1a5a" stroke-width="1"/>
<path d="M11 527.5H26M18.5 519V536" stroke="#2a1a5a" stroke-width="1.1"/>
<g fill="none" stroke="#4a2a8a" stroke-width="0.8"><circle cx="15.2" cy="524.3" r="1"/><circle cx="15.2" cy="530.8" r="1"/><path d="M20.5 523L23 525.5M23 523L20.5 525.5M20.5 529.5L23 532M23 529.5L20.5 532"/></g>
<path d="M5 517L10.5 522.5" stroke="#202020" stroke-width="3.2" stroke-linecap="round"/>
<path d="M5.3 517.3L10 522" stroke="#e8c070" stroke-width="1.6"/>
<rect x="10.5" y="547.5" width="16" height="16" fill="#f4f0fa" stroke="#000"/>
<rect x="10" y="547" width="17" height="3" fill="#1a1040"/>
<path d="M7 553.5H5.5V565.5H7M20 553.5H21.5V565.5H20" fill="none" stroke="#2a1a60" stroke-width="1.2"/>
<text x="7" y="563.5" font-family="Liberation Sans" font-size="9" fill="#2a1a60">ba</text>
<path d="M14 557.5H24M21.5 555L24.5 557.5L21.5 560" fill="none" stroke="#000" stroke-width="1.3"/>
<rect x="9.5" y="578.5" width="18" height="18" fill="#f8f8fa" stroke="#000" stroke-width="1.2"/>
<rect x="11.5" y="580.5" width="6" height="14" fill="#c8c8d0" stroke="#000"/>
<rect x="11" y="580" width="7" height="3" fill="#000"/>
<path d="M18 585L20.5 592H25.5V591" fill="none" stroke="#000" stroke-width="1.2"/>
<path d="M5 577L10.5 582.5" stroke="#202020" stroke-width="3.2" stroke-linecap="round"/>
<path d="M5.3 577.3L10 582" stroke="#e8c070" stroke-width="1.6"/>
</svg>
</body></html>
